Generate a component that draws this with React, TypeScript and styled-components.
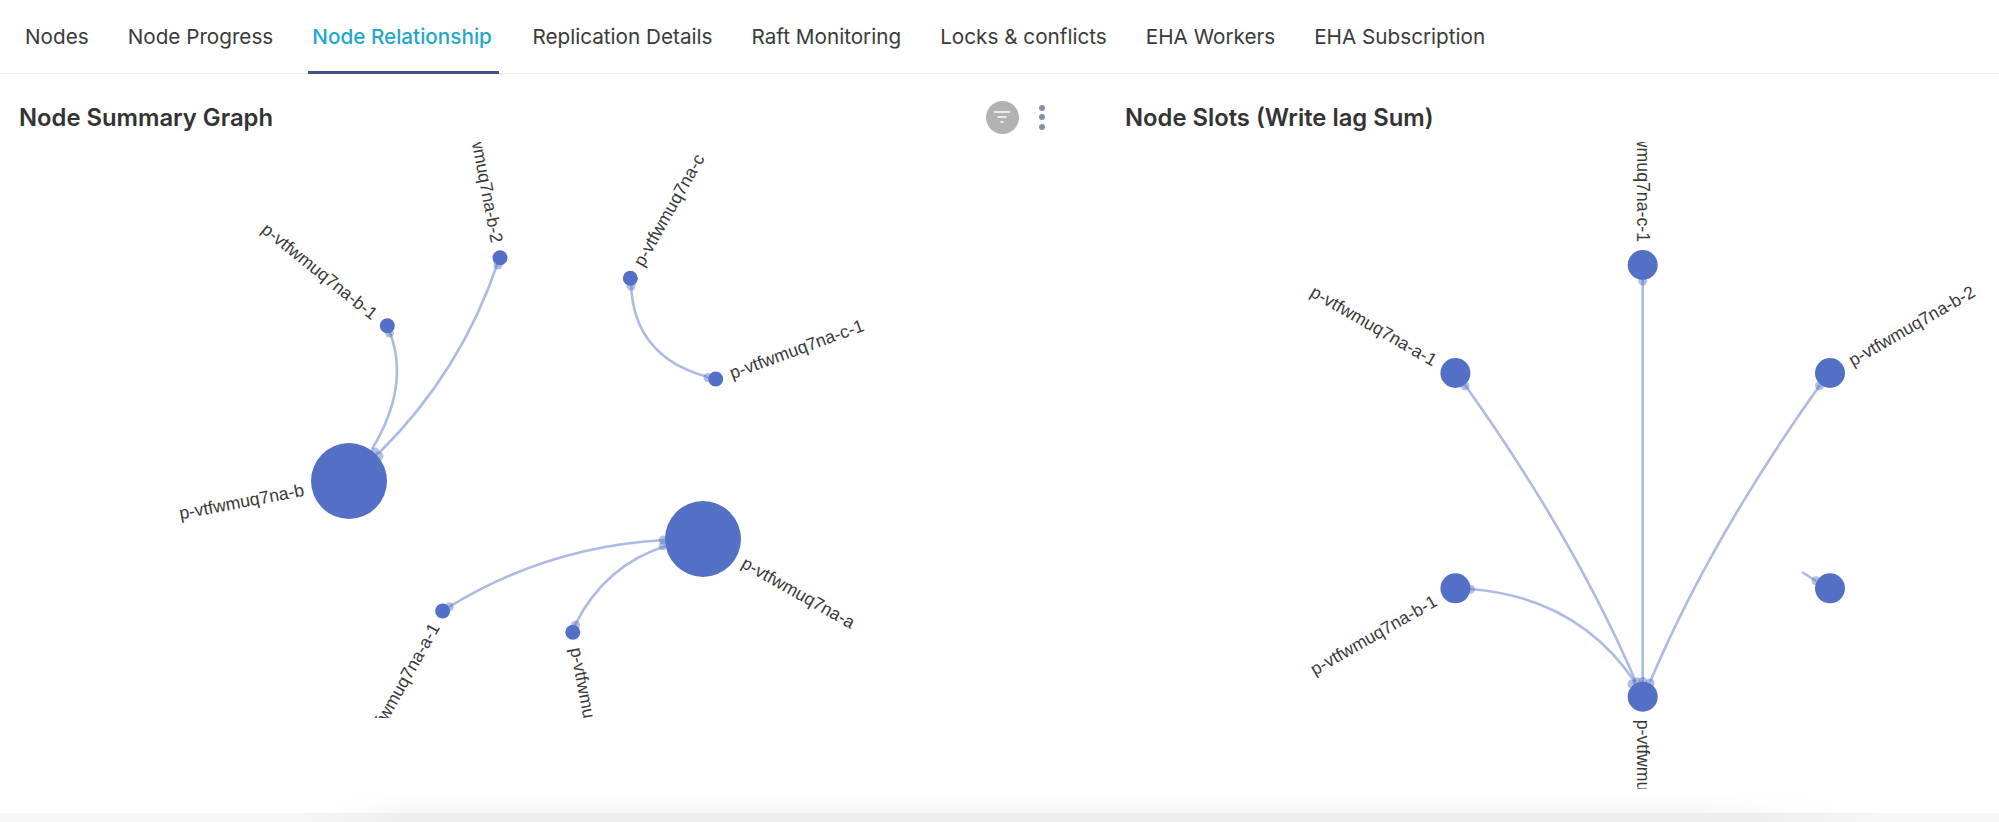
import React from 'react';
import styled, { createGlobalStyle } from 'styled-components';

type GraphNode = {
  x: number;
  y: number;
  r: number;
  label?: string;
};

type GraphEdge = {
  path: string;
  ends: [number, number][];
};

const NODE_BLUE = '#5470c6';

const GlobalStyle = createGlobalStyle`
  html, body {
    margin: 0;
    padding: 0;
    background: #fff;
  }
  body {
    font-family: Inter, "Liberation Sans", sans-serif;
    color: #333;
  }
`;

const Page = styled.div`
  display: flex;
  flex-direction: column;
  width: 1999px;
  height: 822px;
  overflow: hidden;
  background: #fff;
`;

const TabBar = styled.nav`
  display: flex;
  flex-shrink: 0;
  gap: 31px;
  height: 73px;
  padding-left: 21px;
  border-bottom: 1px solid #ececee;
  box-sizing: content-box;
`;

const Tab = styled.a<{ $active?: boolean }>`
  display: flex;
  align-items: center;
  height: 68px;
  padding: 3px ${p => (p.$active ? 7 : 4)}px 0 4px;
  margin-right: ${p => (p.$active ? -1.5 : 0)}px;
  font-size: 20.7px;
  font-weight: ${p => (p.$active ? 500 : 400)};
  line-height: 1;
  white-space: nowrap;
  color: ${p => (p.$active ? '#22a7c9' : '#3a3a3a')};
  border-bottom: 3px solid ${p => (p.$active ? '#45508a' : 'transparent')};
`;

const Panels = styled.div`
  display: flex;
  flex: 1;
  min-height: 0;
`;

const Panel = styled.section<{ $width: number }>`
  width: ${p => p.$width}px;
  flex-shrink: 0;
`;

const PanelHeader = styled.header<{ $inset: number }>`
  display: flex;
  align-items: center;
  justify-content: space-between;
  height: 68px;
  padding: 18px 60px 0 ${p => p.$inset}px;
  box-sizing: border-box;
`;

const PanelTitle = styled.h2`
  margin: 2px 0 0;
  font-size: 23.8px;
  font-weight: 600;
  line-height: 1;
  color: #333;
`;

const HeaderActions = styled.div`
  display: flex;
  align-items: center;
  gap: 20.5px;
`;

const FilterButton = styled.button`
  display: flex;
  align-items: center;
  justify-content: center;
  width: 33px;
  height: 33px;
  padding: 0;
  border: 0;
  border-radius: 50%;
  background: #b2b2b2;
`;

const MoreButton = styled.button`
  display: flex;
  flex-direction: column;
  gap: 3.5px;
  padding: 0;
  border: 0;
  background: none;
`;

const MoreDot = styled.span`
  width: 6px;
  height: 6px;
  border-radius: 50%;
  background: #84939f;
`;

const Chart = styled.svg<{ $height: number }>`
  display: block;
  width: 100%;
  height: ${p => p.$height}px;
  overflow: hidden;
`;

const EdgeLine = styled.path`
  fill: none;
  stroke: ${NODE_BLUE};
  stroke-opacity: 0.48;
  stroke-width: 2.6px;
`;

const EdgeEnd = styled.circle`
  fill: ${NODE_BLUE};
  fill-opacity: 0.45;
`;

const NodeDot = styled.circle`
  fill: ${NODE_BLUE};
`;

const NodeLabel = styled.text`
  font-family: "Liberation Sans", Arial, sans-serif;
  font-size: 17.7px;
  fill: #3a3a3a;
  dominant-baseline: central;
`;

const Footer = styled.div`
  position: relative;
  flex-shrink: 0;
  height: 9px;
  background: linear-gradient(to right, #f6f6f6 15%, #eeeeee 20%, #eeeeee 88%, #f6f6f6 94%);

  &::before {
    content: '';
    position: absolute;
    left: 330px;
    right: 150px;
    bottom: 100%;
    height: 20px;
    background: linear-gradient(to top, #f7f7f7, #ffffff);
    mask-image: linear-gradient(to right, transparent, #000 5%, #000 90%, transparent);
  }
`;

const tabs = [
  'Nodes',
  'Node Progress',
  'Node Relationship',
  'Replication Details',
  'Raft Monitoring',
  'Locks & conflicts',
  'EHA Workers',
  'EHA Subscription',
];

const summaryNodes: GraphNode[] = [
  { x: 349, y: 481, r: 38, label: 'p-vtfwmuq7na-b' },
  { x: 387.3, y: 325.7, r: 7.5, label: 'p-vtfwmuq7na-b-1' },
  { x: 500, y: 257.7, r: 7.5, label: 'p-vtfwmuq7na-b-2' },
  { x: 630.3, y: 278.3, r: 7.5, label: 'p-vtfwmuq7na-c' },
  { x: 715.7, y: 379, r: 7.5, label: 'p-vtfwmuq7na-c-1' },
  { x: 703, y: 539, r: 38, label: 'p-vtfwmuq7na-a' },
  { x: 442.6, y: 611, r: 7.5, label: 'p-vtfwmuq7na-a-1' },
  { x: 572.8, y: 632.3, r: 7.5, label: 'p-vtfwmuq7na-a-2' },
];

const summaryEdges: GraphEdge[] = [
  { path: 'M389 330 Q 411 385 372 449', ends: [[389.5, 333], [375, 452]] },
  { path: 'M498 262 Q 461 372 379 453', ends: [[498, 265], [379, 456]] },
  { path: 'M631 283 Q 633 357 708 377', ends: [[631, 286], [708, 377.5]] },
  { path: 'M449 607 Q 548 546 666 540', ends: [[449.3, 606.7], [663.3, 540]] },
  { path: 'M575 625 Q 605 565 666 546', ends: [[575.6, 625], [663.3, 545.7]] },
];

const slotNodes: GraphNode[] = [
  { x: 1642.7, y: 265, r: 15, label: 'p-vtfwmuq7na-c-1' },
  { x: 1455.4, y: 373, r: 15, label: 'p-vtfwmuq7na-a-1' },
  { x: 1830, y: 373, r: 15, label: 'p-vtfwmuq7na-b-2' },
  { x: 1455.4, y: 588.3, r: 15, label: 'p-vtfwmuq7na-b-1' },
  { x: 1830, y: 588.3, r: 15 },
  { x: 1642.7, y: 696.7, r: 15, label: 'p-vtfwmuq7na-a-2' },
];

const slotEdges: GraphEdge[] = [
  { path: 'M1642.7 280 L 1642.7 682', ends: [[1642.7, 281], [1642.7, 681.5]] },
  { path: 'M1465 385 Q 1574 538 1636 682', ends: [[1465, 385.7], [1637, 682]] },
  { path: 'M1820 385 Q 1711 538 1650 682', ends: [[1819.5, 385.7], [1650, 683]] },
  { path: 'M1470 589 Q 1577 597 1635 682', ends: [[1470.5, 589.3], [1632, 684]] },
  { path: 'M1802 572 L 1816 581', ends: [[1816, 580.7]] },
];

// labels sit on the radius of the circular layout, running away from its centre
const RadialLabel: React.FC<{ node: GraphNode; cx: number; cy: number }> = ({ node, cx, cy }) => {
  const dx = node.x - cx;
  const dy = node.y - cy;
  const len = Math.hypot(dx, dy);
  const gap = node.r + 8;
  const x = node.x + (dx / len) * gap;
  const y = node.y + (dy / len) * gap;
  const onLeft = dx < -0.5 || (Math.abs(dx) <= 0.5 && dy < 0);
  const angle = Math.abs(dx) <= 0.5 ? 90 : (Math.atan2(dy, dx) * 180) / Math.PI + (onLeft ? 180 : 0);
  return (
    <NodeLabel x={x} y={y} textAnchor={onLeft ? 'end' : 'start'} transform={`rotate(${angle} ${x} ${y})`}>
      {node.label}
    </NodeLabel>
  );
};

const Graph: React.FC<{
  viewBox: string;
  height: number;
  nodes: GraphNode[];
  edges: GraphEdge[];
  cx: number;
  cy: number;
}> = ({ viewBox, height, nodes, edges, cx, cy }) => (
  <Chart viewBox={viewBox} $height={height}>
    {edges.map(edge => (
      <g key={edge.path}>
        <EdgeLine d={edge.path} />
        {edge.ends.map(([x, y]) => (
          <EdgeEnd key={`${x}-${y}`} cx={x} cy={y} r={4.5} />
        ))}
      </g>
    ))}
    {nodes.map(node => (
      <g key={`${node.x}-${node.y}`}>
        <NodeDot cx={node.x} cy={node.y} r={node.r} />
        {node.label && <RadialLabel node={node} cx={cx} cy={cy} />}
      </g>
    ))}
  </Chart>
);

const FilterIcon = () => (
  <svg width="18" height="14" viewBox="0 0 18 14" fill="none" stroke="#fff" strokeLinecap="round">
    <path d="M1.5 2 H16.5" strokeWidth="1.6" />
    <path d="M5 7 H13" strokeWidth="1.6" />
    <path d="M8 12 H10" strokeWidth="1.6" />
  </svg>
);

export default function App() {
  return (
    <Page>
      <GlobalStyle />
      <TabBar>
        {tabs.map(tab => (
          <Tab key={tab} $active={tab === 'Node Relationship'}>
            {tab}
          </Tab>
        ))}
      </TabBar>
      <Panels>
        <Panel $width={1105}>
          <PanelHeader $inset={19}>
            <PanelTitle>Node Summary Graph</PanelTitle>
            <HeaderActions>
              <FilterButton aria-label="Filter">
                <FilterIcon />
              </FilterButton>
              <MoreButton aria-label="More">
                <MoreDot />
                <MoreDot />
                <MoreDot />
              </MoreButton>
            </HeaderActions>
          </PanelHeader>
          <Graph viewBox="0 142 1105 576" height={576} nodes={summaryNodes} edges={summaryEdges} cx={536} cy={445} />
        </Panel>
        <Panel $width={894}>
          <PanelHeader $inset={20}>
            <PanelTitle>Node Slots (Write lag Sum)</PanelTitle>
          </PanelHeader>
          <Graph viewBox="1105 142 894 647" height={647} nodes={slotNodes} edges={slotEdges} cx={1642.7} cy={481} />
        </Panel>
      </Panels>
      <Footer />
    </Page>
  );
}
